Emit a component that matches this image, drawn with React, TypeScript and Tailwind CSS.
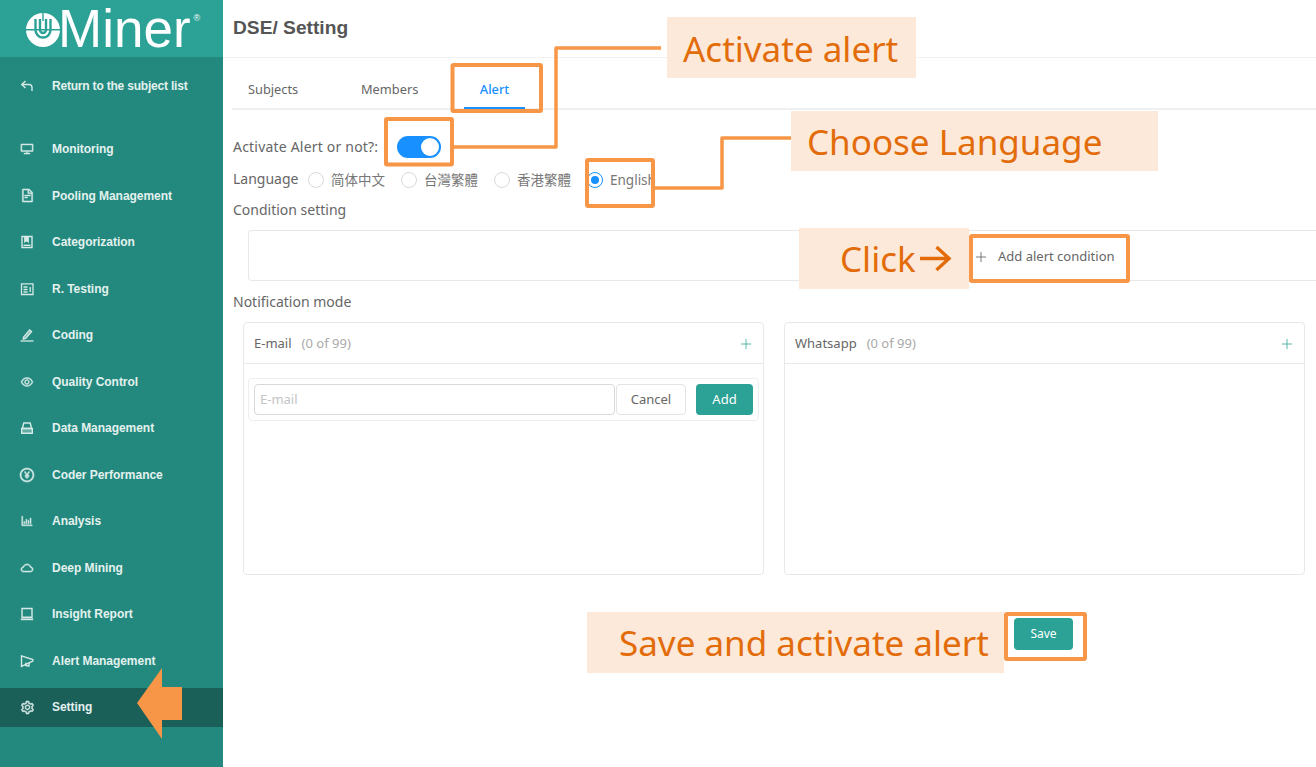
import { Plus } from 'lucide-react';
import {
  AiOutlineBarChart,
  AiOutlineCloud,
  AiOutlineDesktop,
  AiOutlineEye,
  AiOutlineFileText,
  AiOutlinePayCircle,
  AiOutlineSetting,
} from 'react-icons/ai';
import type { ReactNode } from 'react';

const ReturnIcon = () => (
  <svg viewBox="0 0 14 14" className="w-[14px] h-[14px]" fill="none" stroke="currentColor" strokeWidth="1.4">
    <path d="M5.5 2 1.8 5.5 5.5 9" />
    <path d="M1.8 5.5H9a3 3 0 0 1 3 3V12" />
  </svg>
);

const BookIcon = () => (
  <svg viewBox="0 0 14 14" className="w-[14px] h-[14px]" fill="none" stroke="currentColor" strokeWidth="1.4">
    <path d="M2 1.5h10v11H2z" />
    <path d="M4.8 1.5v5.2l1.7-1.2 1.7 1.2V1.500" fill="currentColor" />
    <path d="M3.5 10.300h7" />
  </svg>
);

const TestIcon = () => (
  <svg viewBox="0 0 14 14" className="w-[14px] h-[14px]" fill="none" stroke="currentColor" strokeWidth="1.3">
    <path d="M1.500 1.800h11.500v10.700H1.500z" />
    <path d="M3.500 5h4M3.500 7.500h4M3.500 10h4M10.200 5v5" />
  </svg>
);

const PenIcon = () => (
  <svg viewBox="0 0 14 14" className="w-[14px] h-[14px]" fill="none" stroke="currentColor" strokeWidth="1.3">
    <path d="M3.500 9.200 9.600 1.800l2 1.700-5.900 7-2.500.6z" fill="currentColor" fillOpacity="0.55" />
    <path d="M.5 13h13" />
  </svg>
);

const DriveIcon = () => (
  <svg viewBox="0 0 14 14" className="w-[14px] h-[14px]" fill="none" stroke="currentColor" strokeWidth="1.4">
    <path d="M3.800 2h6.400L11.600 7.500H2.400z" />
    <path d="M1.700 7.500h10.600v4.800H1.700z" fill="currentColor" fillOpacity="0.35" />
  </svg>
);

const LaptopIcon = () => (
  <svg viewBox="0 0 14 14" className="w-[14px] h-[14px]" fill="none" stroke="currentColor" strokeWidth="1.4">
    <path d="M2 1.500h10v8.800H2z" />
    <path d="M.8 12.300h12.400" strokeWidth="1.800" />
  </svg>
);

const MegaphoneIcon = () => (
  <svg viewBox="0 0 14 14" className="w-[14px] h-[14px]" fill="none" stroke="currentColor" strokeWidth="1.4">
    <path d="M1.500 1.800 12.800 5.500v1.600L1.500 12.400z" />
    <path d="M6 8.600 5.600 11.500l3.200.6.600-4" />
  </svg>
);

const heavy = 'stroke-[36]';

const menu: { label: string; icon: ReactNode }[] = [
  { label: 'Monitoring', icon: <AiOutlineDesktop size={14} className={heavy} /> },
  { label: 'Pooling Management', icon: <AiOutlineFileText size={15} className={heavy} /> },
  { label: 'Categorization', icon: <BookIcon /> },
  { label: 'R. Testing', icon: <TestIcon /> },
  { label: 'Coding', icon: <PenIcon /> },
  { label: 'Quality Control', icon: <AiOutlineEye size={14} className={heavy} /> },
  { label: 'Data Management', icon: <DriveIcon /> },
  { label: 'Coder Performance', icon: <AiOutlinePayCircle size={16} className={heavy} /> },
  { label: 'Analysis', icon: <AiOutlineBarChart size={14} className={heavy} /> },
  { label: 'Deep Mining', icon: <AiOutlineCloud size={14} className={heavy} /> },
  { label: 'Insight Report', icon: <LaptopIcon /> },
  { label: 'Alert Management', icon: <MegaphoneIcon /> },
  { label: 'Setting', icon: <AiOutlineSetting size={15} className={heavy} /> },
];

function MenuItem({ label, icon, active, tight }: { label: string; icon: ReactNode; active?: boolean; tight?: boolean }) {
  return (
    <div
      className={`h-[39px] shrink-0 flex items-center pl-[19px] text-[12px] font-bold text-[#e3f1ef] ${
        tight ? 'tracking-[-0.2px]' : 'tracking-[-0.04px]'
      } ${active ? 'bg-[#1b5f59]' : ''}`}
    >
      <span className="w-[16px] flex justify-center text-[#d5e9e6]">{icon}</span>
      <span className="ml-[17px]">{label}</span>
    </div>
  );
}

function Logo() {
  return (
    <div className="h-[57px] bg-[#2ba295] flex items-center pl-[26px] text-white">
      <svg viewBox="0 0 34 34" className="w-[34px] h-[34px] shrink-0 mt-[3px]">
        <circle cx="17" cy="17" r="17" fill="#fff" />
        <path d="M0 16h34v1.400H0zM16.300 0h1.400v8h-1.400z" fill="#2ba295" />
        <path d="M9.500 6v11a7.500 7.500 0 0 0 15 0V6" fill="none" stroke="#2ba295" strokeWidth="2.400" />
        <path d="M14 6v11a3 3 0 0 0 6 0V6" fill="none" stroke="#2ba295" strokeWidth="2.400" />
      </svg>
      <span className="ml-[-2px] text-[53px] leading-[57px] font-['Liberation_Sans',sans-serif]">Miner</span>
      <span className="ml-[3px] mb-[20px] text-[9px] leading-none">®</span>
    </div>
  );
}

function Radio({ label, checked }: { label: string; checked?: boolean }) {
  return (
    <div className="flex items-center w-[93px]">
      <span
        className={`w-[16px] h-[16px] rounded-full border flex items-center justify-center bg-white ${
          checked ? 'border-[#1890ff]' : 'border-[#d9d9d9]'
        }`}
      >
        {checked && <span className="w-[8px] h-[8px] rounded-full bg-[#1890ff]" />}
      </span>
      <span className="ml-[7px] text-[13.5px] text-[#777] whitespace-nowrap">{label}</span>
    </div>
  );
}

function NotifyCard({ title, children }: { title: string; children?: ReactNode }) {
  return (
    <div className="w-[521px] h-[253px] border border-[#e8e8e8] rounded-[4px]">
      <div className="h-[41px] border-b border-[#e8e8e8] flex items-center justify-between pl-[10px] pr-[9px] pt-[1px]">
        <div className="text-[13px]">
          <span className="text-[#666]">{title}</span>
          <span className="ml-[10px] text-[#aaa]">(0 of 99)</span>
        </div>
        <Plus className="w-[16px] h-[16px] text-[#4fb0a5]" strokeWidth={1.4} />
      </div>
      {children}
    </div>
  );
}

function Callout({ className, children }: { className: string; children: ReactNode }) {
  return (
    <div
      className={`absolute bg-[#fde9d9] text-[#e36c0a] text-[35px] leading-none flex items-center whitespace-nowrap font-['Noto_Sans',sans-serif] ${className}`}
    >
      {children}
    </div>
  );
}

export default function App() {
  return (
    <div className="relative w-[1316px] h-[767px] overflow-hidden flex bg-white font-['Noto_Sans','Noto_Sans_CJK_TC',sans-serif]">
      <aside className="w-[223px] shrink-0 bg-[#23897e] font-['Liberation_Sans',sans-serif]">
        <Logo />
        <div className="pt-[9.500px] pb-[24px]">
          <MenuItem label="Return to the subject list" icon={<ReturnIcon />} tight />
        </div>
        <div className="flex flex-col gap-[7.500px]">
          {menu.map((m) => (
            <MenuItem key={m.label} label={m.label} icon={m.icon} active={m.label === 'Setting'} />
          ))}
        </div>
      </aside>

      <main className="flex-1 min-w-0">
        <div className="h-[58px] border-b border-[#f2f2f2] flex items-center pl-[10px]">
          <h1 className="text-[19.200px] font-bold text-[#555] font-['Liberation_Sans',sans-serif]">DSE/ Setting</h1>
        </div>

        <div className="ml-[9px] h-[52px] border-b-2 border-[#f0f0f0] flex text-[12.800px] text-[#666]">
          <div className="w-[129px] pl-[16px] pt-[22px]">Subjects</div>
          <div className="w-[103px] pt-[22px]">Members</div>
          <div className="relative w-[61px] text-center pt-[22px] font-medium text-[#1890ff]">
            Alert
            <div className="absolute left-0 right-0 bottom-[-1px] h-[2px] bg-[#1890ff]" />
          </div>
        </div>

        <div className="pl-[10px]">
          <div className="mt-[25px] h-[24px] flex items-center text-[14px] text-[#666]">
            <span className="tracking-[0.2px] mt-[-2px]">Activate Alert or not?:</span>
            <span className="ml-[19px] w-[44px] h-[22px] rounded-full bg-[#1890ff] flex items-center justify-end pr-[2px]">
              <span className="w-[18px] h-[18px] rounded-full bg-white" />
            </span>
          </div>
          <div className="mt-[9px] h-[24px] flex items-center text-[14px] text-[#666]">
            <span className="w-[75px] mt-[-3px]">Language</span>
            <Radio label="简体中文" />
            <Radio label="台灣繁體" />
            <Radio label="香港繁體" />
            <Radio label="English" checked />
          </div>
          <div className="mt-[7px] h-[20px] flex items-center text-[14px] text-[#666]">Condition setting</div>

          <div className="ml-[15px] mt-[11px] h-[51px] border border-[#e8e8e8] rounded-l-[4px] border-r-0 flex items-center">
            <div className="ml-[724px] mt-[2px] flex items-center text-[13px] text-[#666]">
              <Plus className="w-[16px] h-[16px]" strokeWidth={1.3} />
              <span className="ml-[9px]">Add alert condition</span>
            </div>
          </div>

          <div className="mt-[10px] h-[20px] flex items-center text-[14px] text-[#666]">Notification mode</div>

          <div className="ml-[10px] mt-[11px] flex gap-[20px]">
            <NotifyCard title="E-mail">
              <div className="mx-[4px] mt-[14px] h-[43px] border border-[#eee] rounded-[4px] flex items-center pl-[5px] text-[13px]">
                <div className="w-[361px] h-[31px] border border-[#d9d9d9] rounded-[4px] flex items-center pl-[5px] text-[#c4c4c4]">
                  E-mail
                </div>
                <button className="ml-[1px] w-[70px] h-[31px] border border-[#e3e3e3] rounded-[4px] text-[#666]">Cancel</button>
                <button className="ml-[10px] w-[57px] h-[31px] rounded-[4px] bg-[#2ba295] text-white">Add</button>
              </div>
            </NotifyCard>
            <NotifyCard title="Whatsapp" />
          </div>

          <div className="mt-[43px] ml-[781px] w-[59px] h-[32px] rounded-[4px] bg-[#2ba295] text-white text-[12px] flex items-center justify-center">
            Save
          </div>
        </div>
      </main>

      {/* orange tutorial marks drawn on top of the screenshot */}
      <svg className="absolute left-0 top-0 pointer-events-none" width="1316" height="767" fill="none" stroke="#f79646" strokeWidth="4">
        <polyline points="454,147 556,147 556,48 661,48" strokeLinejoin="round" strokeWidth="3.500" />
        <polyline points="655,188 722,188 722,138 791,138" strokeLinejoin="round" strokeWidth="3.500" />
        <rect x="452.500" y="65" width="88.500" height="46" rx="1" />
        <rect x="386" y="119" width="66" height="45.500" rx="1" />
        <rect x="587" y="160" width="66" height="46" rx="1" />
        <rect x="971" y="236" width="157" height="45" rx="1" />
        <rect x="1006" y="614" width="79" height="45" rx="1" />
        <polygon points="137,703 162,668 162,687 182,687 182,720 162,720 162,739" fill="#f79646" stroke="none" />
      </svg>

      <Callout className="left-[667px] top-[17px] w-[249px] h-[61px] pl-[16px] pt-[1px]">Activate alert</Callout>
      <Callout className="left-[791px] top-[111px] w-[367px] h-[60px] pl-[16px]">Choose Language</Callout>
      <Callout className="left-[799px] top-[228px] w-[170px] h-[61px] pl-[41px]">
        Click
        <svg viewBox="0 0 34 30" className="w-[33px] h-[29px] ml-[3px]" fill="none" stroke="#e36c0a" strokeWidth="3.500">
          <path d="M1 15h30M18 3l13 12-13 12" />
        </svg>
      </Callout>
      <Callout className="left-[587px] top-[612px] w-[417px] h-[61px] pl-[32px]">Save and activate alert</Callout>
    </div>
  );
}
